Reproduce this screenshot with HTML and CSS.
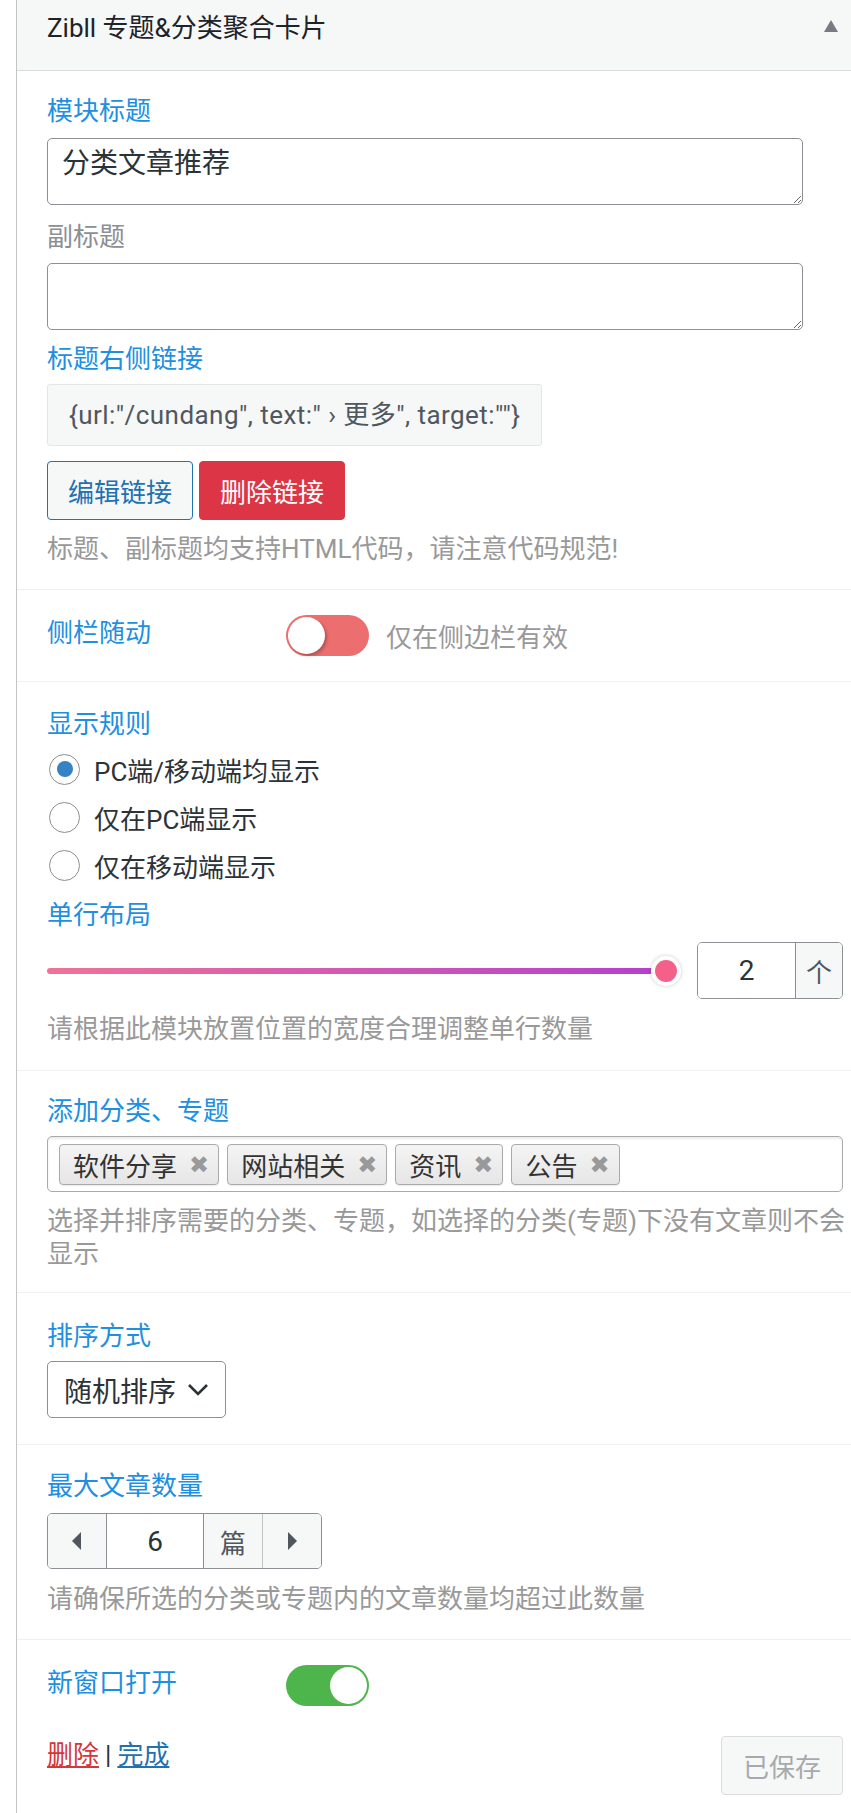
FILE: index.html
```html
<!DOCTYPE html>
<html lang="zh-CN">
  <head>
    <meta charset="UTF-8" />
    <meta name="viewport" content="width=device-width, initial-scale=1.0" />
    <title>Zibll 专题&amp;分类聚合卡片</title>
    <link rel="stylesheet" href="styles.css">
  </head>
  <body>
    <div class="widget">
      <div class="widget-top">
        <h3 class="widget-title">Zibll 专题&amp;分类聚合卡片</h3>
        <svg class="toggle-indicator" width="16" height="14" viewBox="0 0 16 14">
          <polygon points="8,1 15,13 1,13" fill="#787c82" />
        </svg>
      </div>

      <div class="widget-inside">
        <div class="field-block first">
          <label class="field-label" for="title">模块标题</label>
          <textarea id="title" class="field-textarea">分类文章推荐</textarea>
          <label class="field-label muted" for="subtitle">副标题</label>
          <textarea id="subtitle" class="field-textarea sub"></textarea>
          <label class="field-label link-label">标题右侧链接</label>
          <div class="link-preview">{url:"/cundang", text:" › 更多", target:""}</div>
          <div class="btn-row">
            <button type="button" class="btn btn-edit">编辑链接</button>
            <button type="button" class="btn btn-delete">删除链接</button>
          </div>
          <p class="field-desc">标题、副标题均支持HTML代码，请注意代码规范!</p>
        </div>

        <div class="field-block switch-block">
          <div class="field-row">
            <span class="field-label inline">侧栏随动</span>
            <span class="switch off"><span class="knob"></span></span>
            <span class="switch-note">仅在侧边栏有效</span>
          </div>
        </div>

        <div class="field-block rules">
          <span class="field-label tight">显示规则</span>
          <label class="radio-item"><input type="radio" name="show" checked /><span>PC端/移动端均显示</span></label>
          <label class="radio-item"><input type="radio" name="show" /><span>仅在PC端显示</span></label>
          <label class="radio-item"><input type="radio" name="show" /><span>仅在移动端显示</span></label>

          <span class="field-label layout-label">单行布局</span>
          <div class="slider-row">
            <div class="range">
              <span class="range-thumb"></span>
            </div>
            <div class="number-box">
              <input type="text" class="number-input" value="2" />
              <span class="number-unit">个</span>
            </div>
          </div>
          <p class="field-desc">请根据此模块放置位置的宽度合理调整单行数量</p>
        </div>

        <div class="field-block tags-block">
          <span class="field-label">添加分类、专题</span>
          <div class="tag-box">
            <span class="tag">软件分享<i class="tag-x">✖</i></span>
            <span class="tag">网站相关<i class="tag-x">✖</i></span>
            <span class="tag">资讯<i class="tag-x">✖</i></span>
            <span class="tag">公告<i class="tag-x">✖</i></span>
          </div>
          <p class="field-desc multi">选择并排序需要的分类、专题，如选择的分类(专题)下没有文章则不会显示</p>
        </div>

        <div class="field-block order-block">
          <span class="field-label">排序方式</span>
          <div class="select-box">
            <span>随机排序</span>
            <svg width="22" height="14" viewBox="0 0 22 14">
              <polyline points="2,2 11,11 20,2" fill="none" stroke="#2c3338" stroke-width="2.6" />
            </svg>
          </div>
        </div>

        <div class="field-block count-block">
          <span class="field-label">最大文章数量</span>
          <div class="stepper">
            <span class="step-btn">
              <svg width="10" height="18" viewBox="0 0 10 18"><polygon points="9,0 9,18 0,9" fill="#50575e" /></svg>
            </span>
            <input type="text" class="step-input" value="6" />
            <span class="step-unit">篇</span>
            <span class="step-btn">
              <svg width="10" height="18" viewBox="0 0 10 18"><polygon points="1,0 1,18 10,9" fill="#50575e" /></svg>
            </span>
          </div>
          <p class="field-desc">请确保所选的分类或专题内的文章数量均超过此数量</p>
        </div>

        <div class="field-block last">
          <div class="field-row">
            <span class="field-label inline">新窗口打开</span>
            <span class="switch on"><span class="knob"></span></span>
          </div>
          <div class="widget-actions">
            <div class="action-links">
              <a href="#" class="link-delete">删除</a><span class="sep">|</span><a href="#" class="link-done">完成</a>
            </div>
            <button type="button" class="btn btn-saved" disabled>已保存</button>
          </div>
        </div>
      </div>
    </div>
  </body>
</html>
```

FILE: styles.css
```css
body {
  margin: 0;
  background: #fff;
  font-family: Roboto, "Noto Sans CJK SC", sans-serif;
  font-size: 26px;
  color: #2c3338;
}
.widget {
  margin-left: 16px;
  border-left: 1px solid #c3c4c7;
  min-height: 1813px;
}
.widget-top {
  height: 71px;
  background: #f6f7f7;
  border-bottom: 1px solid #dcdcde;
  display: flex;
  justify-content: space-between;
  padding: 11px 12px 0 30px;
  box-sizing: border-box;
}
.widget-title {
  margin: 0;
  font-size: 26px;
  font-weight: normal;
  line-height: 34px;
  color: #1d2327;
}
.toggle-indicator {
  margin-top: 8px;
}
.field-block {
  padding: 23px 8px 23px 30px;
  border-bottom: 1px solid #f0f0f1;
}
.field-block.first {
  padding-top: 23px;
}
.field-block.last {
  border-bottom: none;
  padding-top: 25px;
}
.field-label {
  display: block;
  line-height: 34px;
  color: #1e8fe1;
  margin-bottom: 10px;
}
.field-label.muted {
  color: #8c8f94;
  margin-bottom: 9px;
}
.field-label.link-label {
  margin-bottom: 8px;
}
.field-textarea {
  display: block;
  width: 95%;
  height: 67px;
  box-sizing: border-box;
  margin: 0 0 15px;
  padding: 7px 14px;
  border: 1px solid #8c8f94;
  border-radius: 5px;
  font-family: inherit;
  font-size: 28px;
  line-height: 36px;
  color: #2c3338;
}
.field-textarea.sub {
  margin-bottom: 12px;
}
.link-preview {
  display: inline-block;
  height: 62px;
  line-height: 60px;
  padding: 0 21px;
  box-sizing: border-box;
  background: #f6f7f7;
  border: 1px solid #e5e5e5;
  border-radius: 3px;
  color: #50575e;
  letter-spacing: 0.45px;
  margin-bottom: 15px;
}
.btn-row {
  display: flex;
  gap: 6px;
  margin-bottom: 12px;
}
.btn {
  height: 59px;
  padding: 0 20px;
  border-radius: 4px;
  font-family: inherit;
  font-size: 26px;
  cursor: pointer;
}
.btn-edit {
  background: #f6f7f7;
  border: 1px solid #2271b1;
  color: #2271b1;
}
.btn-delete {
  background: #dc3545;
  border: 1px solid #dc3545;
  color: #fff;
}
.field-desc {
  margin: 0;
  line-height: 34px;
  color: #999;
}
.field-desc.multi {
  line-height: 33px;
  margin-right: -8px;
}

/* switch rows */
.field-row {
  display: flex;
  align-items: center;
}
.switch-block {
  padding-top: 25px;
  padding-bottom: 25px;
}
.field-label.inline {
  width: 239px;
  margin: -5px 0 0;
}
.switch {
  width: 83px;
  height: 41px;
  border-radius: 21px;
  display: flex;
  align-items: center;
  padding: 0 2px;
  box-sizing: border-box;
}
.switch.off {
  background: #ec6e6e;
}
.switch.on {
  background: #4db54b;
  justify-content: flex-end;
}
.knob {
  width: 37px;
  height: 37px;
  border-radius: 50%;
  background: #fff;
}
.switch.off .knob {
  box-shadow: 2px 2px 3px rgba(0, 0, 0, 0.25);
}
.switch-note {
  margin-left: 17px;
  color: #999;
}

/* radios */
.rules {
  padding-top: 25px;
  padding-bottom: 24px;
}
.field-label.tight {
  margin-bottom: 4px;
}
.radio-item {
  display: flex;
  align-items: center;
  height: 48px;
  gap: 14px;
}
.radio-item input {
  appearance: none;
  width: 31px;
  height: 31px;
  margin: 0 0 0 2px;
  border: 1px solid #8c8f94;
  border-radius: 50%;
  background: #fff;
  display: flex;
  align-items: center;
  justify-content: center;
}
.radio-item input:checked::before {
  content: "";
  width: 16px;
  height: 16px;
  border-radius: 50%;
  background: #3582c4;
}
.field-label.layout-label {
  margin-top: 9px;
  margin-bottom: 10px;
}

/* range + number */
.slider-row {
  display: flex;
  align-items: center;
  margin-bottom: 13px;
}
.range {
  flex: 1;
  height: 6px;
  border-radius: 3px;
  background: linear-gradient(to right, #ef7397, #b43fce);
  margin-right: 31px;
  position: relative;
}
.range-thumb {
  position: absolute;
  right: -15px;
  top: -12px;
  width: 22px;
  height: 22px;
  border: 4px solid #fff;
  border-radius: 50%;
  background: #f5608a;
  box-shadow: 0 0 4px rgba(0, 0, 0, 0.2);
}
.number-box {
  display: flex;
  width: 146px;
  height: 57px;
  border: 1px solid #8c8f94;
  border-radius: 5px;
  overflow: hidden;
  box-sizing: border-box;
}
.number-input {
  width: 97px;
  border: none;
  border-right: 1px solid #8c8f94;
  text-align: center;
  font-family: inherit;
  font-size: 28px;
  color: #2c3338;
  padding: 0;
}
.number-unit {
  flex: 1;
  background: #f6f7f7;
  color: #50575e;
  display: flex;
  align-items: center;
  justify-content: center;
}

/* tags */
.tags-block {
  padding-bottom: 21px;
}
.tags-block .field-label {
  margin-bottom: 8px;
}
.tag-box {
  height: 56px;
  box-sizing: border-box;
  border: 1px solid #aaa;
  border-radius: 5px;
  box-shadow: inset 0 2px 2px rgba(0, 0, 0, 0.08);
  padding: 7px 11px;
  display: flex;
  gap: 8px;
  margin-bottom: 13px;
}
.tag {
  height: 41px;
  box-sizing: border-box;
  display: inline-flex;
  align-items: center;
  padding: 0 9px 0 13px;
  border: 1px solid #aaa;
  border-radius: 4px;
  background: linear-gradient(#f4f4f4, #e6e6e6);
  box-shadow: 0 1px 1px rgba(0, 0, 0, 0.08);
  color: #333;
}
.tag-x {
  font-style: normal;
  font-family: "DejaVu Sans", sans-serif;
  font-size: 24px;
  color: #999;
  margin-left: 12px;
}

/* select */
.order-block {
  padding-top: 26px;
  padding-bottom: 26px;
}
.order-block .field-label {
  margin-bottom: 8px;
}
.select-box {
  display: inline-flex;
  align-items: center;
  gap: 11px;
  height: 57px;
  box-sizing: border-box;
  padding: 0 16px 0 16px;
  border: 1px solid #8c8f94;
  border-radius: 5px;
  font-size: 28px;
  color: #2c3338;
}

/* stepper */
.count-block {
  padding-top: 24px;
}
.stepper {
  display: inline-flex;
  height: 56px;
  border: 1px solid #8c8f94;
  border-radius: 5px;
  overflow: hidden;
  box-sizing: border-box;
  margin-bottom: 13px;
}
.step-btn,
.step-unit {
  width: 58px;
  background: #f6f7f7;
  display: flex;
  align-items: center;
  justify-content: center;
  color: #50575e;
}
.step-input {
  width: 98px;
  box-sizing: border-box;
  border: none;
  border-left: 1px solid #8c8f94;
  border-right: 1px solid #8c8f94;
  text-align: center;
  font-family: inherit;
  font-size: 28px;
  color: #2c3338;
  padding: 0;
}
.step-unit {
  border-right: 1px solid #c3c4c7;
}

/* footer */
.widget-actions {
  display: flex;
  justify-content: space-between;
  align-items: flex-start;
  margin-top: 30px;
}
.action-links {
  line-height: 34px;
  margin-top: 2px;
}
.link-delete {
  color: #d63638;
}
.link-done {
  color: #2271b1;
}
.sep {
  color: #2c3338;
  margin: 0 6px;
}
.btn-saved {
  background: #f6f7f7;
  border: 1px solid #dcdcde;
  color: #a7aaad;
  padding: 0 21px;
  cursor: default;
}
```
